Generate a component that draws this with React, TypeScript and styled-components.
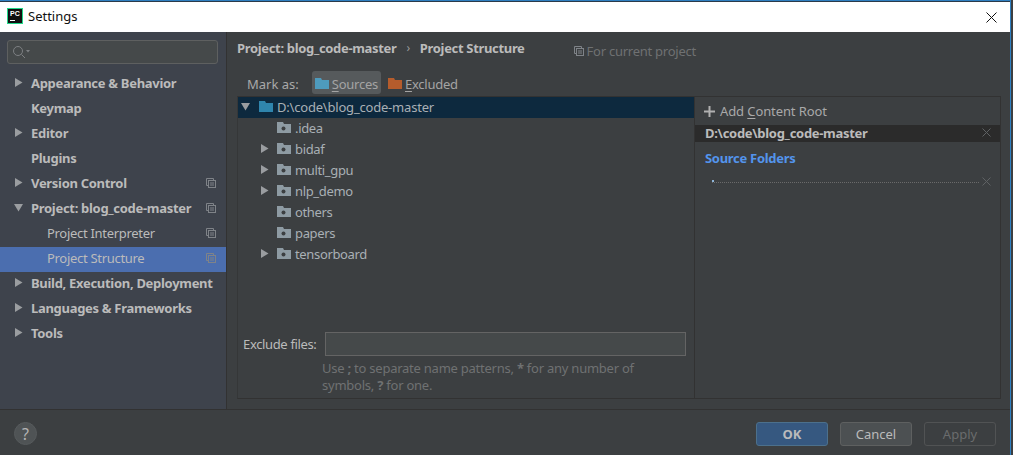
import React from "react";
import styled, { createGlobalStyle } from "styled-components";

const Global = createGlobalStyle`
  html, body { margin: 0; padding: 0; background: #3c3f41; }
  * { box-sizing: border-box; }
`;

const Win = styled.div`
  width: 1013px; height: 455px; overflow: hidden; position: relative;
  display: flex; flex-direction: column;
  background: #3c3f41; color: #bbbbbb;
  font-family: "Noto Sans", "Open Sans", sans-serif; font-size: 13px;
  border-right: 2px solid #3c3f41;
`;
const EdgeLine = styled.div`
  position: absolute; top: 0; right: 0; width: 1px; height: 455px; background: #2f7fc1;
`;
const TopStrip = styled.div`height: 2px; flex: none; background: #2b3a4a; border-top: 1px solid #2f7fc1;`;
const TitleBar = styled.div`
  height: 30px; flex: none; background: #fff; color: #111;
  display: flex; align-items: center; padding: 0 14px 0 7px; gap: 5px;
  font-size: 13px;
`;
const TitleText = styled.span`flex: 1; position: relative; top: -1px;`;
const PcLogo = styled.div`
  width: 16px; height: 16px; background: #111; border: 1px solid #21d789;
  color: #fff; font: bold 7px/8px "Liberation Sans", sans-serif; padding: 1px 0 0 2px; position: relative; top: -1px;
  &::after { content: ""; position: absolute; left: 2px; bottom: 2px; width: 5px; height: 1px; background: #fff; }
`;
const Body = styled.div`flex: none; height: 378px; display: flex;`;
const Sidebar = styled.nav`
  width: 227px; flex: none; background: #3e434c; border-right: 1px solid #323232;
  padding-top: 8px; display: flex; flex-direction: column;
`;
const Search = styled.div`
  margin: 0 8px 8px 7px; height: 24px; background: #45494a; border: 1px solid #5e6060; border-radius: 3px;
  display: flex; align-items: center; padding-left: 4px;
`;
const Row = styled.div<{ $selected?: boolean; $indent?: number; $bold?: boolean }>`
  height: 25px; display: flex; align-items: center; flex: none;
  padding: 0 10px 4px ${(p) => p.$indent ?? 14}px;
  background: ${(p) => (p.$selected ? "#4b6eaf" : "transparent")};
  font-weight: ${(p) => (p.$bold ? 700 : 400)}; font-size: 13px;
  letter-spacing: -0.3px;
  color: #bbbbbb;
  white-space: nowrap;
`;
const ArrowSlot = styled.span<{ $w: number }>`width: ${(p) => p.$w}px; flex: none; display: inline-flex;`;
const RowLabel = styled.span`flex: 1;`;
const Main = styled.main`flex: 1; padding: 0 10px 0 10px; display: flex; flex-direction: column; min-width: 0;`;
const Crumbs = styled.div`
  height: 31px; flex: none; display: flex; align-items: center;
  font-weight: 700; font-size: 13px; color: #bbbbbb; letter-spacing: -0.33px;
`;
const Chevron = styled.span`margin: 0 10px 0 10px; font-weight: 400; color: #999; font-size: 12px;`;
const ScopeNote = styled.span`
  margin-left: 49px; font-weight: 400; color: #6f7172; display: inline-flex; align-items: center; gap: 3px; letter-spacing: -0.25px;
  position: relative; top: 3px;
`;
const MarkBar = styled.div`
  height: 25px; flex: none; margin-top: 7px; padding-left: 10px; display: flex; align-items: center;
`;
const MarkLabel = styled.span`margin-right: 13px; color: #a9a9a9; position: relative; top: 1px;`;
const MarkBtn = styled.span<{ $active?: boolean }>`
  height: 23px; display: inline-flex; align-items: center; gap: 3px;
  padding: 2px 3px 0; border-radius: 3px; margin-right: 4px; color: #a4a4a4; letter-spacing: -0.25px;
  background: ${(p) => (p.$active ? "#565a5c" : "transparent")};
`;
const Panels = styled.div`
  flex: none; height: 303px; display: flex; border: 1px solid #323232; border-left: 1px solid #353738;
  margin-top: 1px;
`;
const TreePane = styled.div`
  width: 457px; flex: none; border-right: 1px solid #323232; display: flex; flex-direction: column;
`;
const TreeRows = styled.div`height: 229px; flex: none;`;
const TreeRow = styled.div<{ $selected?: boolean; $depth: number }>`
  height: 21px; display: flex; align-items: center; white-space: nowrap; color: #a9b0b5;
  padding: 0 0 2px ${(p) => p.$depth}px; gap: 3px; letter-spacing: ${(p) => (p.$selected ? "-0.2px" : "-0.35px")};
  background: ${(p) => (p.$selected ? "#0d293e" : "transparent")};
`;
const RootArrowGap = styled.span`width: 3px; flex: none;`;
const TreeText = styled.span`margin-left: 1px;`;
const ExcludeRow = styled.div`
  display: flex; align-items: center; padding: 5px 8px 0 5px; height: 29px; flex: none; margin-top: 1px;
`;
const ExcludeLabel = styled.span`width: 82px; flex: none; color: #bbbbbb; letter-spacing: -0.35px;`;
const ExcludeInput = styled.div`
  flex: 1; height: 24px; background: #45494a; border: 1px solid #646464;
`;
const Hint = styled.div`
  padding: 4px 0 0 84px; color: #6f7172; line-height: 17px; font-size: 13px; letter-spacing: -0.24px;
`;
const HintLine = styled.div`
  white-space: nowrap;
  b { font-weight: 700; }
`;
const RootPane = styled.div`flex: 1; display: flex; flex-direction: column; min-width: 0;`;
const AddRoot = styled.div`
  height: 28px; flex: none; display: flex; align-items: center; gap: 5px; padding-left: 9px; color: #a9a9a9; letter-spacing: -0.1px;
`;
const RootTitle = styled.div`
  height: 17px; flex: none; background: #2b2b2b; display: flex; align-items: center; justify-content: space-between;
  padding: 0 9px 2px 10px; font-weight: 700; color: #bbbbbb; letter-spacing: -0.3px;
`;
const SourceHead = styled.div`
  margin: 7px 0 0 10px; font-weight: 700; color: #5394ec; height: 18px; line-height: 18px; flex: none; letter-spacing: -0.3px;
`;
const SourceRow = styled.div`
  margin: 5px 9px 0 17px; height: 14px; display: flex; align-items: flex-end; gap: 3px;
`;
const Dotted = styled.div`flex: 1; border-bottom: 1px dotted #6a6a6a; height: 5px; margin-bottom: 3px; position: relative;
  &::before { content: ""; position: absolute; left: 0; bottom: 0; width: 2px; height: 2px; background: #8fb5d8; }
`;
const Footer = styled.footer`
  flex: 1; border-top: 1px solid #323232; display: flex; align-items: center; padding: 2px 15px 0 14px; gap: 12px;
  margin-top: -1px;
`;
const Help = styled.div`
  width: 23px; height: 23px; border-radius: 50%; background: #4f5355; color: #b4b4b4; margin-right: auto;
  display: flex; align-items: center; justify-content: center; font-weight: 400; font-size: 16px;
  border: 1px solid #565a5c;
`;
const Btn = styled.button<{ $variant?: "primary" | "disabled" }>`
  width: 72px; height: 24px; border-radius: 3px; padding: 0;
  font: ${(p) => (p.$variant === "primary" ? 700 : 400)} 13px "Noto Sans", sans-serif;
  color: ${(p) => (p.$variant === "disabled" ? "#6a6c6d" : "#bbbbbb")};
  background: ${(p) => (p.$variant === "primary" ? "#365880" : p.$variant === "disabled" ? "transparent" : "#4c5052")};
  border: 1px solid ${(p) => (p.$variant === "primary" ? "#4c708c" : p.$variant === "disabled" ? "#515354" : "#5e6060")};
`;
const U = styled.span`text-decoration: underline; text-underline-offset: 2px;`;

const Arrow = ({ down, color = "#9a9da0" }: { down?: boolean; color?: string }) => (
  <svg width="9" height="9" viewBox="0 0 9 9">
    <path d={down ? "M0 1 H9 L4.5 8.5 Z" : "M1 0 V9 L8.5 4.5 Z"} fill={color} />
  </svg>
);
const CopyIcon = () => (
  <svg width="10" height="10" viewBox="0 0 10 10" fill="none" stroke="#7f8388">
    <path d="M2.5 7.5 H.5 V.5 H7.5 V2.5" />
    <rect x="2.5" y="2.5" width="7" height="7" />
    <path d="M4 5 H8 M4 7 H8" />
  </svg>
);
const Folder = ({ color, w = 14 }: { color: string; w?: number }) => (
  <svg width={w} height="11" viewBox="0 0 14 11">
    <path d="M0 0 H6 L7 2 H14 V11 H0 Z" fill={color} />
  </svg>
);
const DotFolder = () => (
  <svg width="14" height="11" viewBox="0 0 14 11">
    <path d="M0 0 H6 L7 2 H14 V11 H0 Z" fill="#8e9ba3" />
    <circle cx="6.5" cy="6.5" r="2" fill="#3c3f41" />
  </svg>
);
const Cross = ({ color = "#5f6264" }: { color?: string }) => (
  <svg width="9" height="9" viewBox="0 0 9 9" stroke={color} fill="none"><path d="M.5 .5 L8.5 8.5 M8.5 .5 L.5 8.5" /></svg>
);

const nav = [
  { label: "Appearance & Behavior", arrow: "r", bold: true },
  { label: "Keymap", bold: true },
  { label: "Editor", arrow: "r", bold: true },
  { label: "Plugins", bold: true },
  { label: "Version Control", arrow: "r", bold: true, copy: true },
  { label: "Project: blog_code-master", arrow: "d", bold: true, copy: true },
  { label: "Project Interpreter", sub: true, copy: true },
  { label: "Project Structure", sub: true, copy: true, selected: true },
  { label: "Build, Execution, Deployment", arrow: "r", bold: true },
  { label: "Languages & Frameworks", arrow: "r", bold: true },
  { label: "Tools", arrow: "r", bold: true },
];
const tree = [
  { label: ".idea" },
  { label: "bidaf", arrow: true },
  { label: "multi_gpu", arrow: true },
  { label: "nlp_demo", arrow: true },
  { label: "others" },
  { label: "papers" },
  { label: "tensorboard", arrow: true },
];

export default function App() {
  return (
    <Win>
      <Global />
      <EdgeLine />
      <TopStrip />
      <TitleBar>
        <PcLogo>PC</PcLogo>
        <TitleText>Settings</TitleText>
        <svg width="11" height="11" viewBox="0 0 11 11" stroke="#111" fill="none"><path d="M.5 .5 L10.5 10.5 M10.5 .5 L.5 10.5" /></svg>
      </TitleBar>
      <Body>
        <Sidebar>
          <Search>
            <svg width="18" height="14" viewBox="0 0 18 14" fill="none" stroke="#7d8083">
              <circle cx="6" cy="6" r="4.5" />
              <path d="M9.5 9.5 L13 13" />
              <path d="M14 5 H18 L16 7.5 Z" fill="#7d8083" stroke="none" />
            </svg>
          </Search>
          {nav.map((n) => (
            <Row key={n.label} $selected={n.selected} $bold={n.bold} $indent={n.sub ? 47 : 14}>
              {!n.sub && <ArrowSlot $w={17}>{n.arrow && <Arrow down={n.arrow === "d"} />}</ArrowSlot>}
              <RowLabel>{n.label}</RowLabel>
              {n.copy && <CopyIcon />}
            </Row>
          ))}
        </Sidebar>
        <Main>
          <Crumbs>
            Project: blog_code-master<Chevron>›</Chevron>Project Structure
            <ScopeNote><CopyIcon />For current project</ScopeNote>
          </Crumbs>
          <MarkBar>
            <MarkLabel>Mark as:</MarkLabel>
            <MarkBtn $active><Folder color="#4e9bbd" /><span><U>S</U>ources</span></MarkBtn>
            <MarkBtn><Folder color="#b55c2c" /><span><U>E</U>xcluded</span></MarkBtn>
          </MarkBar>
          <Panels>
            <TreePane>
              <TreeRows>
                <TreeRow $selected $depth={3}>
                  <Arrow down />
                  <RootArrowGap />
                  <Folder color="#2f85ad" />
                  <TreeText>D:\code\blog_code-master</TreeText>
                </TreeRow>
                {tree.map((t) => (
                  <TreeRow key={t.label} $depth={22}>
                    <ArrowSlot $w={14}>{t.arrow && <Arrow />}</ArrowSlot>
                    <DotFolder />
                    <TreeText>{t.label}</TreeText>
                  </TreeRow>
                ))}
              </TreeRows>
              <ExcludeRow>
                <ExcludeLabel>Exclude files:</ExcludeLabel>
                <ExcludeInput />
              </ExcludeRow>
              <Hint>
                <HintLine>Use <b>;</b> to separate name patterns, <b>*</b> for any number of</HintLine>
                <HintLine>symbols, <b>?</b> for one.</HintLine>
              </Hint>
            </TreePane>
            <RootPane>
              <AddRoot>
                <svg width="11" height="11" viewBox="0 0 11 11" fill="#b0b0b0"><path d="M4.5 0 H6.5 V4.5 H11 V6.5 H6.5 V11 H4.5 V6.5 H0 V4.5 H4.5 Z" /></svg>
                <span>Add <U>C</U>ontent Root</span>
              </AddRoot>
              <RootTitle>D:\code\blog_code-master<Cross /></RootTitle>
              <SourceHead>Source Folders</SourceHead>
              <SourceRow><Dotted /><Cross /></SourceRow>
            </RootPane>
          </Panels>
        </Main>
      </Body>
      <Footer>
        <Help>?</Help>
        <Btn $variant="primary">OK</Btn>
        <Btn>Cancel</Btn>
        <Btn $variant="disabled">Apply</Btn>
      </Footer>
    </Win>
  );
}
